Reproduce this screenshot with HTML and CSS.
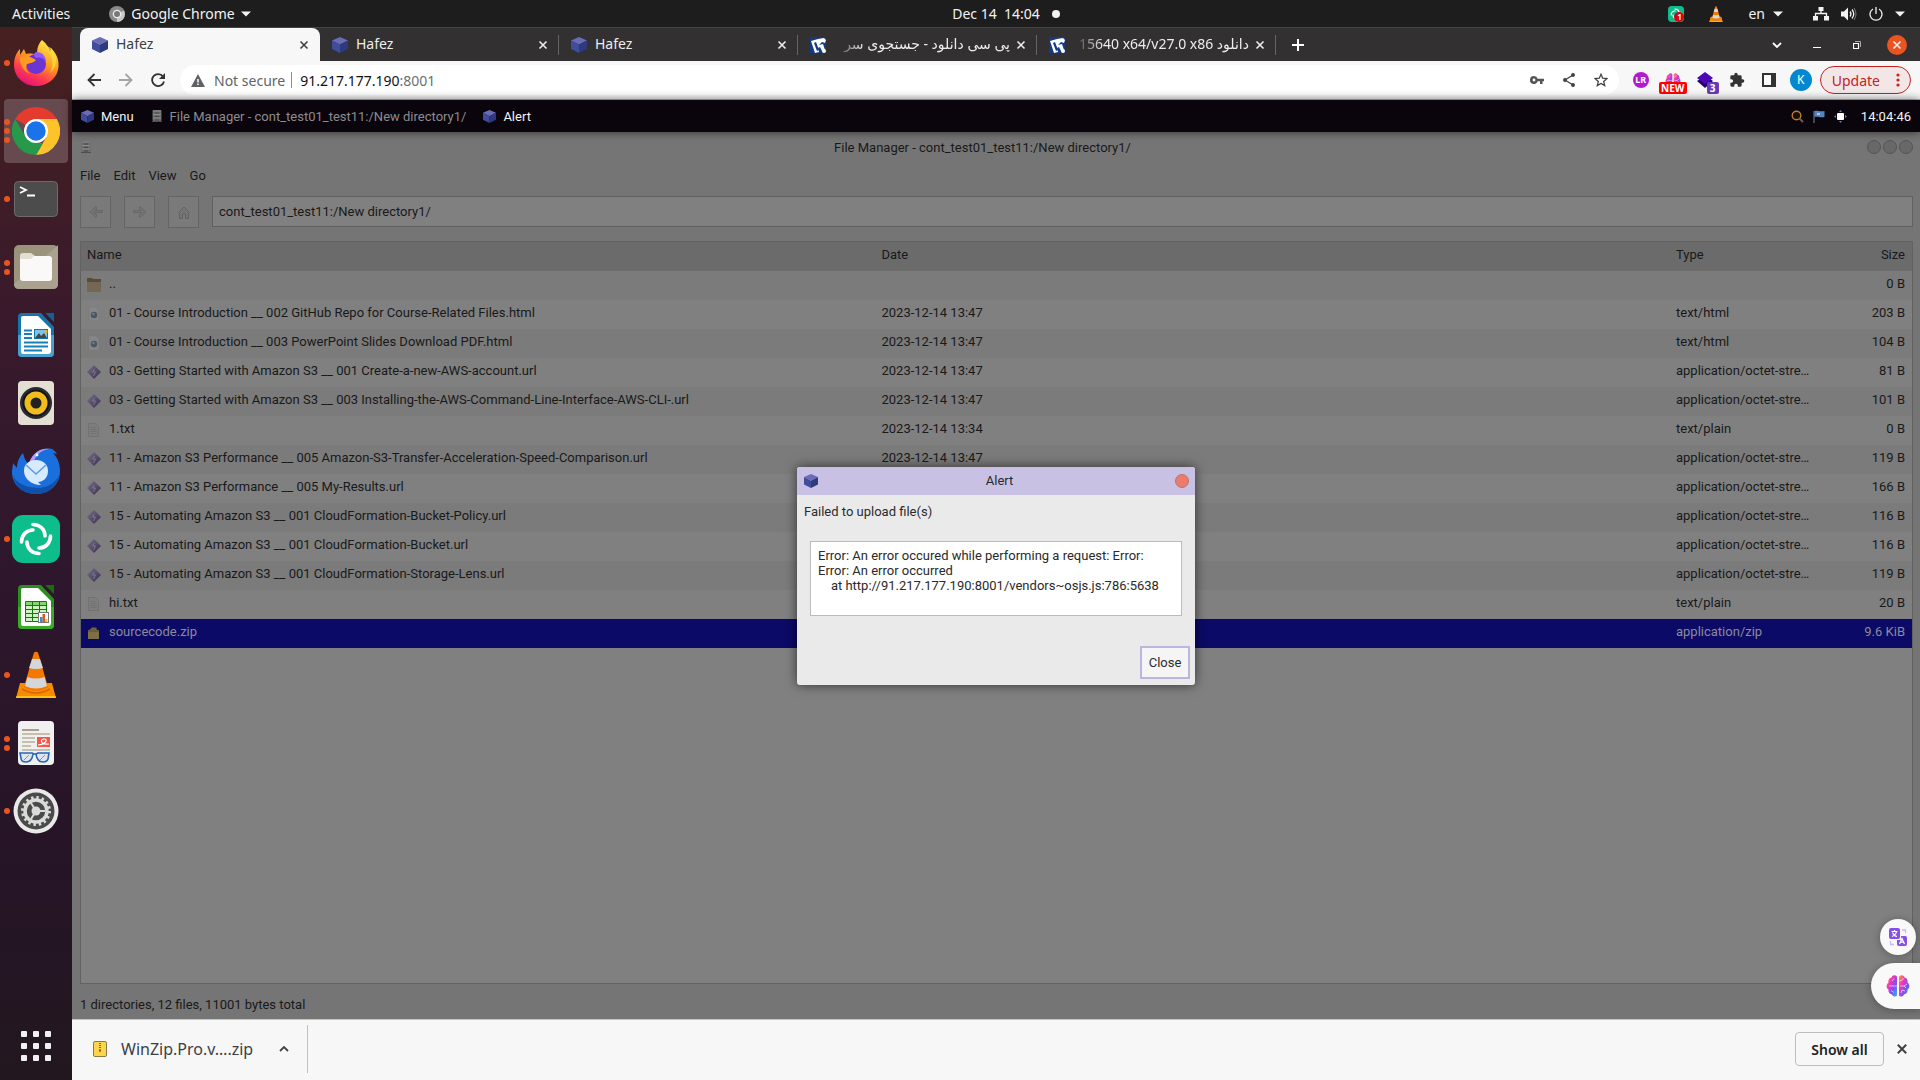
FILE: index.html
```html
<!DOCTYPE html>
<html lang="en">
<head>
    <meta charset="UTF-8">
    <meta name="viewport" content="width=device-width, initial-scale=1.0">
    <title>Hafez</title>
    <link rel="stylesheet" href="styles.css">
</head>
<body>
    <!-- shared icons -->
    <svg class="sprite" width="0" height="0" aria-hidden="true">
        <defs>
            <linearGradient id="diamond-fill" x1="0" y1="0" x2="1" y2="1">
                <stop offset="0" stop-color="#74728a"/>
                <stop offset="1" stop-color="#3c2b4e"/>
            </linearGradient>
            <linearGradient id="brain-fill" x1="0" y1="0" x2="1" y2="1">
                <stop offset="0" stop-color="#ff9d2e"/>
                <stop offset=".35" stop-color="#f033c0"/>
                <stop offset=".65" stop-color="#7a52f5"/>
                <stop offset="1" stop-color="#2fb4ff"/>
            </linearGradient>
        </defs>
        <symbol id="cube" viewBox="0 0 16 16">
            <path d="M8 0l8 3.400-8 4.200L0 3.400z" fill="#6a6cb8"/>
            <path d="M0 3.400l8 4.200V16l-8-4z" fill="#414c9c"/>
            <path d="M16 3.400L8 7.600V16l8-4z" fill="#2e3a7e"/>
        </symbol>
        <symbol id="cross" viewBox="0 0 10 10">
            <path d="M1.500 1.500l7 7M8.500 1.500l-7 7" stroke="currentColor" stroke-width="1.600" fill="none"/>
        </symbol>
        <symbol id="caret" viewBox="0 0 10 6">
            <path d="M0 .5h10L5 5.500z" fill="currentColor"/>
        </symbol>
        <symbol id="cabinet" viewBox="0 0 12 14">
            <rect x="1.500" y="1" width="9" height="11" rx="1" fill="#6a6a6a"/>
            <path d="M2 2h8M2 5.500h8M2 9h8" stroke="#8c8c8c"/>
            <path d="M4 4h4M4 7.500h4M4 11h4" stroke="#484848"/>
            <path d="M1 12.500h10" stroke="#4c4c4c"/>
        </symbol>
        <symbol id="diamond" viewBox="0 0 14 14">
            <path d="M7 0l7 7-7 7-7-7z" fill="url(#diamond-fill)"/>
            <path d="M7.500 4l-2 3 3 0-2 4" stroke="#7d7690" fill="none"/>
        </symbol>
        <symbol id="html-file" viewBox="0 0 14 14">
            <path d="M2 0h7l3 3v11H2z" fill="#868686" stroke="#767676" stroke-width=".5"/>
            <circle cx="7" cy="8" r="3.200" fill="#4a5666"/>
            <circle cx="6.400" cy="7" r="1.300" fill="#6d7b8c"/>
        </symbol>
        <symbol id="text-file" viewBox="0 0 14 14">
            <path d="M1.500 .5h7l3 3v10h-10z" fill="#7d7d7d" stroke="#727272"/>
            <path d="M3.500 4.500h5M3.500 6.500h6M3.500 8.500h6M3.500 10.500h6" stroke="#727272"/>
        </symbol>
        <symbol id="folder" viewBox="0 0 14 14">
            <path d="M0 0h5l1 1h8v12H0z" fill="#564c38"/>
            <path d="M0 4h14v10H0z" fill="#746854"/>
        </symbol>
        <symbol id="zip-file" viewBox="0 0 14 14">
            <path d="M2 4l4-3 2 1 1-1 1 3z" fill="#6e6248"/>
            <path d="M1 4h11v9H1z" fill="#7f6f47"/>
            <path d="M1 4h11v2H1z" fill="#6d5c38"/>
        </symbol>
        <symbol id="brain" viewBox="0 0 24 22">
            <path d="M11 1.500C9-.5 6 0 5.500 2.500 3 3 2 5 2.500 7.500 0 9.500 0 13 2.500 14.500 2 17.500 4 19 6 19.500c1 2.500 4 2.500 5 1z" fill="url(#brain-fill)"/>
            <path d="M13 1.500c2-2 5-1.500 5.500 1 2.500.5 3.500 2.500 3 5 2.500 2 2.500 5.500 0 7 .5 3-1.500 4.500-3.500 5-1 2.500-4 2.500-5 1z" fill="url(#brain-fill)"/>
            <path d="M3 11h8M5 15.500l3 2M8 3.500L6 6M13.500 6l3-1 1-2M14 11h4l3-2M18 11l2 2M15 18l1-3 3 1" stroke="#fff" stroke-opacity=".6" fill="none"/>
        </symbol>
        <symbol id="site-mark" viewBox="0 0 16 16">
            <rect width="16" height="16" fill="#123a86"/>
            <path d="M1 4l7-2 6-1 2 2-1 3-3-1-3 3 4-1 2 6-3 1-2-4-2 1 1 4-4 1z" fill="#fff"/>
            <path d="M4 6l2-1 3 8-2 1z" fill="#123a86"/>
            <circle cx="14" cy="14" r="2" fill="#fff"/>
        </symbol>
        <symbol id="element" viewBox="0 0 48 48">
            <rect width="48" height="48" rx="11" fill="#0dbd8b"/>
            <g fill="none" stroke="#fff" stroke-width="3.600" stroke-linecap="round">
                <path d="M21 9.500c7 0 12 5 12 11.500"/>
                <path d="M38.500 21c0 7-5 12-11.500 12"/>
                <path d="M27 38.500c-7 0-12-5-12-11.500"/>
                <path d="M9.500 27c0-7 5-12 11.500-12"/>
            </g>
        </symbol>
        <symbol id="cone" viewBox="0 0 48 48">
            <path d="M8 32h32l4 15H4z" fill="#f98b00"/>
            <path d="M4.500 45h39l.5 2H4z" fill="#ffc21a"/>
            <path d="M22 1.500q2-1.500 4 0L36 36q-12 8-24 0z" fill="#f57900"/>
            <path d="M20 8h8l3 9q-7 2-14 0zM15.500 26q8.500 3 17 0l2.500 9q-11 5-22 0z" fill="#d3d7da"/>
            <path d="M10 38q14 8 28 0" fill="none" stroke="#d96500" stroke-width="1.500"/>
        </symbol>
    </svg>

    <header class="topbar">
        <div class="topbar-left">
            <button class="top-btn">Activities</button>
            <button class="top-btn app-menu">
                <svg width="16" height="16" viewBox="0 0 16 16"><circle cx="8" cy="8" r="8" fill="#8a8a8a"/><path d="M8 8l7-3.500A8 8 0 0 1 8 16z" fill="#c9c9c9"/><circle cx="8" cy="8" r="4.300" fill="#eee"/><circle cx="8" cy="8" r="3" fill="#777"/></svg>
                Google Chrome
                <svg width="10" height="6"><use href="#caret"/></svg>
            </button>
        </div>
        <button class="top-btn clock">Dec 14&nbsp; 14:04 <span class="dot"></span></button>
        <div class="topbar-right">
            <button class="tray-btn badge-host" aria-label="Element">
                <svg width="16" height="16"><use href="#element"/></svg>
                <span class="tray-badge">1</span>
            </button>
            <button class="tray-btn cone-btn" aria-label="VLC"><svg width="16" height="16"><use href="#cone"/></svg></button>
            <button class="top-btn lang">en <svg width="10" height="6"><use href="#caret"/></svg></button>
            <button class="tray-btn system" aria-label="System menu">
                <svg width="16" height="14" viewBox="0 0 16 14"><path d="M5.500 0h5v4h-5zM0 9h5v4.500H0zM11 9h5v4.500h-5z" fill="#f2f2f2"/><path d="M8 4v2.500M2.500 9V6.500h11V9" fill="none" stroke="#f2f2f2" stroke-width="1.300"/></svg>
                <svg width="16" height="14" viewBox="0 0 16 14"><path d="M0 4.500h3L7 .5v13l-4-4H0z" fill="#f2f2f2"/><path d="M9 4.500q2 2.500 0 5M11 2.500q3.500 4.500 0 9" fill="none" stroke="#f2f2f2" stroke-width="1.300"/><path d="M13 1q4 6 0 12" fill="none" stroke="#777"/></svg>
                <svg width="14" height="14" viewBox="0 0 14 14"><path d="M4 2a6 6 0 1 0 6 0M7 0v7" fill="none" stroke="#f2f2f2" stroke-width="1.300"/></svg>
                <svg width="10" height="6"><use href="#caret"/></svg>
            </button>
        </div>
    </header>

    <div class="desktop">
        <nav class="dock">
            <button class="dock-item" aria-label="Firefox">
                <span class="dots"><i></i></span>
                <svg width="48" height="48" viewBox="0 0 48 48">
                    <defs><linearGradient id="ff" x1=".8" y1="0" x2=".3" y2="1"><stop offset="0" stop-color="#fff44f"/><stop offset=".45" stop-color="#ff9a1f"/><stop offset=".75" stop-color="#ff3a50"/><stop offset="1" stop-color="#e0107c"/></linearGradient></defs>
                    <path d="M30 1c5 4 7 8 8 12 1-2 1-3 1-4 5 5 8 11 7.500 18C46 39 36 47 24 47S2 38 2 26c0-7 2-12 6-16v6l4-6 2 5c5-1 8 0 11 1 0-6 1-11 5-15z" fill="url(#ff)"/>
                    <circle cx="24" cy="25" r="10" fill="#6a35d0"/>
                    <path d="M24 13c7 0 10 5 10 10-3-5-7-5-10-4-2-2-3-4 0-6z" fill="#9059ff"/>
                    <path d="M8 18c6-2 9-1 16 3-2 3-6 3-9 4-2 4 0 8 4 10-8-2-11-9-11-17z" fill="#ff9b22"/>
                    <path d="M33 6c5 8 11 17 5 28 8-7 8-17 1-25z" fill="#ffe13c" opacity=".7"/>
                </svg>
            </button>
            <button class="dock-item active" aria-label="Google Chrome">
                <span class="dots"><i></i><i></i><i></i></span>
                <svg width="48" height="48" viewBox="0 0 48 48">
                    <path d="M24 24L3.200 12A24 24 0 0 1 44.800 12z" fill="#e33b2e"/>
                    <path d="M24 24V12h20.800A24 24 0 0 1 24 48l10.400-18z" fill="#fcc42a"/>
                    <path d="M3.200 12l10.400 18L24 36h7l-7 12A24 24 0 0 1 3.200 12z" fill="#26994a"/>
                    <circle cx="24" cy="24" r="12" fill="#fff"/>
                    <circle cx="24" cy="24" r="9.700" fill="#1a73e8"/>
                </svg>
            </button>
            <button class="dock-item" aria-label="Terminal">
                <span class="dots"><i></i></span>
                <svg width="48" height="48" viewBox="0 0 48 48">
                    <rect x="2.500" y="6.500" width="43" height="35" rx="4" fill="#4c4c4c" stroke="#6c6c6c"/>
                    <path d="M8 12l6 3-6 3M15 20.500h8" fill="none" stroke="#fff" stroke-width="1.800"/>
                </svg>
            </button>
            <button class="dock-item" aria-label="Files">
                <span class="dots"><i></i><i></i></span>
                <svg width="48" height="48" viewBox="0 0 48 48">
                    <rect x="2" y="2" width="44" height="44" rx="5" fill="#9c937c"/>
                    <path d="M46 2v39q0 5-5 5H7q-5 0-5-5z" fill="#aaa28e"/>
                    <path d="M8 13q0-3 3-3h8l4 3v6H8z" fill="#e3ded3"/>
                    <path d="M8 16h11l3-3h15q3 0 3 3v19q0 3-3 3H11q-3 0-3-3z" fill="#faf9f7"/>
                </svg>
            </button>
            <button class="dock-item" aria-label="LibreOffice Writer">
                <svg width="48" height="48" viewBox="0 0 48 48">
                    <path d="M10 2h19l13 14v26q0 4-4 4H10q-4 0-4-4V6q0-4 4-4z" fill="#1674ad"/>
                    <path d="M6 24h36v18q0 4-4 4H10q-4 0-4-4z" fill="#48a0d0"/>
                    <path d="M11 5h15l13 13v22q0 3-3 3H11q-2 0-2-3V7q0-2 2-2z" fill="#fff"/>
                    <path d="M33 2h9v9z" fill="#15618e"/>
                    <path d="M12 19.500h8M12 23h8M12 27h8M12 31.500h24M12 35.500h24M12 39.500h18" stroke="#1780b8" stroke-width="1.800"/>
                    <rect x="22.500" y="18.500" width="13" height="9" fill="#7cc2ea" stroke="#1674ad"/>
                    <path d="M23 27l4-5 2 3 3-3 3 5z" fill="#444"/><circle cx="34" cy="20.500" r="1.600" fill="#f5b400"/>
                </svg>
            </button>
            <button class="dock-item" aria-label="Rhythmbox">
                <svg width="48" height="48" viewBox="0 0 48 48">
                    <rect x="6" y="2" width="36" height="44" rx="4" fill="#e4dfd3"/>
                    <circle cx="24" cy="24" r="16" fill="#2b2b33"/>
                    <circle cx="24" cy="24" r="13.500" fill="#14141a"/>
                    <circle cx="24" cy="24" r="11.500" fill="#f0bd1c"/>
                    <circle cx="24" cy="24" r="5.500" fill="#222"/>
                </svg>
            </button>
            <button class="dock-item" aria-label="Thunderbird">
                <svg width="48" height="48" viewBox="0 0 48 48">
                    <path d="M11 6c1 5 3 9 6 11C20 6 29 0 40 2c2 1 4 3 5 5l-4-1c4 4 7 10 7 18 0 13-10 23-24 23S0 37 0 25c0-4 1-6 1-9l4 5c0-7 3-12 6-15z" fill="#1a6fdc"/>
                    <path d="M1 28c4 14 38 20 46 0-2 12-11 19-23 19S3 40 1 28z" fill="#0f51a8"/>
                    <path d="M17 16C21 5 30 1 37 2c-8 1-13 6-15 12z" fill="#b79af5"/>
                    <circle cx="25" cy="8" r="1.400" fill="#fff"/>
                    <path d="M12 24c0-7 5-11 12-11s12 4 12 11-5 11-10 11l3 3c-9 0-17-6-17-14z" fill="#d6ebff"/>
                    <path d="M14 18l10 9 10-9" fill="none" stroke="#5c9ae6" stroke-width="1.500"/>
                </svg>
            </button>
            <button class="dock-item" aria-label="Element">
                <span class="dots"><i></i></span>
                <svg width="48" height="48"><use href="#element"/></svg>
            </button>
            <button class="dock-item" aria-label="LibreOffice Calc">
                <svg width="48" height="48" viewBox="0 0 48 48">
                    <path d="M10 2h19l13 14v26q0 4-4 4H10q-4 0-4-4V6q0-4 4-4z" fill="#2b8f1d"/>
                    <path d="M6 24h36v18q0 4-4 4H10q-4 0-4-4z" fill="#3cab2a"/>
                    <path d="M11 5h15l13 13v22q0 3-3 3H11q-2 0-2-3V7q0-2 2-2z" fill="#fff"/>
                    <path d="M33 2h9v9z" fill="#1c6b12"/>
                    <path d="M14 19h20v20H14z" fill="#ccf3c0"/>
                    <path d="M14 19h20v4H14z" fill="#86d573"/>
                    <path d="M13.500 18.500h21v20h-21zM20.500 18v21M27.500 18v21M13 22.500h22M13 26.500h22M13 30.500h22M13 34.500h22" fill="none" stroke="#1a7410"/>
                    <rect x="26.500" y="29.500" width="10" height="10" fill="#fff" stroke="#777"/>
                    <path d="M28 34h2.500v5H28z" fill="#2a94d8"/><path d="M30.500 31H33v8h-2.500z" fill="#d9572b"/><path d="M33 36h2.500v3H33z" fill="#f3c22b"/>
                </svg>
            </button>
            <button class="dock-item" aria-label="VLC media player">
                <span class="dots"><i></i></span>
                <svg width="48" height="48"><use href="#cone"/></svg>
            </button>
            <button class="dock-item" aria-label="Document Viewer">
                <span class="dots"><i></i><i></i></span>
                <svg width="48" height="48" viewBox="0 0 48 48">
                    <rect x="6" y="2" width="36" height="44" rx="4" fill="#f0f0f0"/>
                    <path d="M10 11h17" stroke="#a89f90" stroke-width="2"/>
                    <path d="M10 15h28M10 19h13M10 23h13M10 27h9M10 31h28" stroke="#c6bfae" stroke-width="1.800"/>
                    <rect x="25" y="18" width="13" height="10" fill="#f4564a"/>
                    <path d="M26 26c9-1 10-6 6-6s-4 6 5 5" fill="none" stroke="#fff" stroke-width="1.200"/>
                    <path d="M8 34h12q3 2 6 0h11l-1 6q-1 3-5 3-6 0-7-8h-3q-1 8-7 8-5 0-5-4z" fill="#dfe6ee" stroke="#2a66b8" stroke-width="1.600"/>
                    <path d="M12 41l5-5M28 41l5-5" stroke="#8d959e"/>
                </svg>
            </button>
            <button class="dock-item" aria-label="Settings">
                <span class="dots"><i></i></span>
                <svg width="48" height="48" viewBox="0 0 48 48">
                    <circle cx="24" cy="24" r="22.500" fill="#e9e9e9"/>
                    <circle cx="24" cy="24" r="18.500" fill="#4a4a4a"/>
                    <circle cx="24" cy="24" r="13.500" fill="none" stroke="#dadada" stroke-width="3" stroke-dasharray="2.400 2.900"/>
                    <circle cx="24" cy="24" r="11" fill="none" stroke="#dadada" stroke-width="3.500"/>
                    <path d="M24 24h9M24 24l-5-8M24 24l-5 8" stroke="#dadada" stroke-width="2"/>
                    <circle cx="24" cy="24" r="4.500" fill="#dadada"/>
                </svg>
            </button>
            <button class="dock-item apps" aria-label="Show Applications">
                <svg width="30" height="30" viewBox="0 0 30 30" fill="#f2f0f2">
                    <rect width="6" height="6" rx="1"/><rect x="12" width="6" height="6" rx="1"/><rect x="24" width="6" height="6" rx="1"/>
                    <rect y="12" width="6" height="6" rx="1"/><rect x="12" y="12" width="6" height="6" rx="1"/><rect x="24" y="12" width="6" height="6" rx="1"/>
                    <rect y="24" width="6" height="6" rx="1"/><rect x="12" y="24" width="6" height="6" rx="1"/><rect x="24" y="24" width="6" height="6" rx="1"/>
                </svg>
            </button>
        </nav>

        <div class="browser">
            <div class="tabstrip">
                <div class="tab current">
                    <svg width="16" height="16"><use href="#cube"/></svg>
                    <span class="tab-title">Hafez</span>
                    <button class="tab-close" aria-label="Close tab"><svg width="10" height="10"><use href="#cross"/></svg></button>
                </div>
                <div class="tab">
                    <svg width="16" height="16"><use href="#cube"/></svg>
                    <span class="tab-title">Hafez</span>
                    <button class="tab-close" aria-label="Close tab"><svg width="10" height="10"><use href="#cross"/></svg></button>
                </div>
                <div class="tab">
                    <svg width="16" height="16"><use href="#cube"/></svg>
                    <span class="tab-title">Hafez</span>
                    <button class="tab-close" aria-label="Close tab"><svg width="10" height="10"><use href="#cross"/></svg></button>
                </div>
                <div class="tab">
                    <svg width="16" height="16"><use href="#site-mark"/></svg>
                    <span class="tab-title rtl" dir="rtl" lang="fa">پی سی دانلود - جستجوی سر</span>
                    <button class="tab-close" aria-label="Close tab"><svg width="10" height="10"><use href="#cross"/></svg></button>
                </div>
                <div class="tab">
                    <svg width="16" height="16"><use href="#site-mark"/></svg>
                    <span class="tab-title rtl" dir="rtl" lang="fa">دانلود <bdi dir="ltr">15640 x64/v27.0 x86</bdi></span>
                    <button class="tab-close" aria-label="Close tab"><svg width="10" height="10"><use href="#cross"/></svg></button>
                </div>
                <button class="new-tab" aria-label="New tab"><svg width="12" height="12" viewBox="0 0 12 12"><path d="M6 0v12M0 6h12" stroke="#fff" stroke-width="2"/></svg></button>
                <div class="window-controls">
                    <button aria-label="Search tabs"><svg width="10" height="6" viewBox="0 0 10 6"><path d="M1 1l4 4 4-4" fill="none" stroke="#fff" stroke-width="1.800"/></svg></button>
                    <button aria-label="Minimize"><svg width="8" height="8" viewBox="0 0 8 8"><path d="M0 6.500h8" stroke="#fff"/></svg></button>
                    <button aria-label="Restore"><svg width="8" height="8" viewBox="0 0 8 8"><path d="M.5 2.500h5v5h-5z" fill="none" stroke="#fff" stroke-width="1.200"/><path d="M2 .5h5.500V6" fill="none" stroke="#aaa"/></svg></button>
                    <button class="close-window" aria-label="Close"><svg width="10" height="10"><use href="#cross"/></svg></button>
                </div>
            </div>

            <div class="toolbar">
                <button class="tool" aria-label="Back"><svg width="14" height="14" viewBox="0 0 14 14"><path d="M14 7H1.500M7.500 1L1.500 7l6 6" fill="none" stroke="#333" stroke-width="1.800"/></svg></button>
                <button class="tool" aria-label="Forward"><svg width="14" height="14" viewBox="0 0 14 14"><path d="M0 7h12.500M6.500 1l6 6-6 6" fill="none" stroke="#a5a5a5" stroke-width="1.800"/></svg></button>
                <button class="tool" aria-label="Reload"><svg width="14" height="14" viewBox="0 0 14 14"><path d="M12 3.500A6 6 0 1 0 13 8.500" fill="none" stroke="#333" stroke-width="1.800"/><path d="M14 0v6H8z" fill="#333"/></svg></button>
                <div class="omnibox">
                    <button class="site-info"><svg width="14" height="13" viewBox="0 0 14 13"><path d="M7 0l7 13H0z" fill="#5f6368"/><path d="M7 5v3.500M7 9.500v1.500" stroke="#fff" stroke-width="1.500"/></svg>Not secure</button>
                    <span class="address" role="textbox" aria-label="Address" tabindex="0">91.217.177.190<em>:8001</em></span>
                    <button class="tool" aria-label="Passwords"><svg width="14" height="8" viewBox="0 0 14 8"><path d="M4 0a4 4 0 1 0 3.700 5.300H10V8h2.500V5.300H14V2.700H7.700A4 4 0 0 0 4 0zm0 2.600a1.400 1.400 0 1 1 0 2.800 1.400 1.400 0 0 1 0-2.800z" fill="#555"/></svg></button>
                    <button class="tool" aria-label="Share"><svg width="12" height="14" viewBox="0 0 12 14"><path d="M10 2L2 7l8 5" fill="none" stroke="#444" stroke-width="1.300"/><circle cx="10" cy="2" r="2" fill="#444"/><circle cx="2" cy="7" r="2" fill="#444"/><circle cx="10" cy="12" r="2" fill="#444"/></svg></button>
                    <button class="tool" aria-label="Bookmark"><svg width="14" height="14" viewBox="0 0 14 14"><path d="M7 1.300l1.700 3.900 4.200.4-3.200 2.800 1 4.200L7 10.400l-3.700 2.200 1-4.200L1.100 5.600l4.200-.4z" fill="none" stroke="#444" stroke-width="1.300"/></svg></button>
                </div>
                <button class="tool" aria-label="LR extension"><span class="lr">LR</span></button>
                <button class="tool badge-host" aria-label="Brain extension"><svg width="16" height="15"><use href="#brain"/></svg><span class="badge new">NEW</span></button>
                <button class="tool badge-host" aria-label="Layers extension"><svg width="16" height="16" viewBox="0 0 16 16"><path d="M8 4l8 5-8 7-8-7z" fill="#240070"/><path d="M8 0l8 6-8 6-8-6z" fill="#4a08b8"/></svg><span class="badge count">3</span></button>
                <button class="tool" aria-label="Extensions"><svg width="16" height="16" viewBox="0 0 24 24"><path d="M20.500 11H19V7a2 2 0 0 0-2-2h-4V3.500a2.500 2.500 0 0 0-5 0V5H4a2 2 0 0 0-2 2v3.800h1.500a2.700 2.700 0 0 1 0 5.400H2V20a2 2 0 0 0 2 2h3.800v-1.500a2.700 2.700 0 0 1 5.400 0V22H17a2 2 0 0 0 2-2v-4h1.500a2.500 2.500 0 0 0 0-5z" fill="#333"/></svg></button>
                <button class="tool" aria-label="Side panel"><svg width="14" height="14" viewBox="0 0 14 14"><rect x="1" y="1" width="12" height="12" fill="#fff" stroke="#333" stroke-width="2"/><path d="M9 0h5v14H9z" fill="#333"/></svg></button>
                <button class="tool" aria-label="Profile"><span class="avatar">K</span></button>
                <button class="update">Update <svg width="4" height="14" viewBox="0 0 4 14"><g fill="#c5221f"><circle cx="2" cy="2" r="1.600"/><circle cx="2" cy="7" r="1.600"/><circle cx="2" cy="12" r="1.600"/></g></svg></button>
            </div>

            <main class="page">
                <div class="panel">
                    <button class="panel-item"><svg width="13" height="13"><use href="#cube"/></svg>Menu</button>
                    <button class="panel-item muted"><svg width="12" height="14"><use href="#cabinet"/></svg>File Manager - cont_test01_test11:/New directory1/</button>
                    <button class="panel-item"><svg width="13" height="13"><use href="#cube"/></svg>Alert</button>
                    <div class="panel-tray">
                        <svg width="13" height="13" viewBox="0 0 13 13"><circle cx="5.500" cy="5.500" r="4.300" fill="#16100c" stroke="#c27a2c" stroke-width="1.400"/><path d="M8.500 8.500l3.500 3.500" stroke="#7d5e44" stroke-width="1.800"/></svg>
                        <svg width="12" height="13" viewBox="0 0 12 13"><path d="M1 1v12" stroke="#7c8894"/><path d="M1.500 1c3-1 5 1 10 0v6c-4 1-7-1-10 0z" fill="#5585bd"/><path d="M4 3h3v2H4z" fill="#a9c4e0"/></svg>
                        <svg width="13" height="13" viewBox="0 0 13 13"><rect x="3" y="3" width="7" height="7" rx="1" fill="#fff"/><path d="M5 2l1.500-2L8 2zM5 11l1.500 2L8 11zM2 5L0 6.500 2 8zM11 5l2 1.500L11 8z" fill="#5a82b0"/></svg>
                        <time>14:04:46</time>
                    </div>
                </div>

                <div class="workspace">
                    <section class="file-manager">
                        <div class="fm-title">
                            <svg width="12" height="14"><use href="#cabinet"/></svg>
                            <span>File Manager - cont_test01_test11:/New directory1/</span>
                            <div class="fm-controls">
                                <button aria-label="Minimize"></button><button aria-label="Maximize"></button><button aria-label="Close"></button>
                            </div>
                        </div>
                        <div class="fm-menu">
                            <button>File</button><button>Edit</button><button>View</button><button>Go</button>
                        </div>
                        <div class="fm-toolbar">
                            <button aria-label="Back"><svg width="14" height="12" viewBox="0 0 14 12"><path d="M7 .5L1 6l6 5.500L8 9 5 6.500h8.500v-2H6L8 3z" fill="#747474" stroke="#646464" stroke-width=".8"/></svg></button>
                            <button aria-label="Forward"><svg width="14" height="12" viewBox="0 0 14 12"><path d="M7 .5L13 6l-6 5.500L6 9l3-2.500H.5v-2H8L6 3z" fill="#747474" stroke="#646464" stroke-width=".8"/></svg></button>
                            <button aria-label="Home"><svg width="14" height="13" viewBox="0 0 14 13"><path d="M1 7l6-6 6 6M2.500 7v5.500h3V8h3v4.500h3V7" fill="#747474" stroke="#626262"/></svg></button>
                            <input type="text" aria-label="Path" value="cont_test01_test11:/New directory1/">
                        </div>
                        <div class="fm-list">
                            <table>
                                <thead>
                                    <tr><th>Name</th><th>Date</th><th class="col-type">Type</th><th class="col-size">Size</th></tr>
                                </thead>
                                <tbody>
                                    <tr><td><svg width="14" height="14"><use href="#folder"/></svg>..</td><td></td><td></td><td>0 B</td></tr>
                                    <tr><td><svg width="14" height="14"><use href="#html-file"/></svg>01 - Course Introduction __ 002 GitHub Repo for Course-Related Files.html</td><td>2023-12-14 13:47</td><td>text/html</td><td>203 B</td></tr>
                                    <tr><td><svg width="14" height="14"><use href="#html-file"/></svg>01 - Course Introduction __ 003 PowerPoint Slides Download PDF.html</td><td>2023-12-14 13:47</td><td>text/html</td><td>104 B</td></tr>
                                    <tr><td><svg width="14" height="14"><use href="#diamond"/></svg>03 - Getting Started with Amazon S3 __ 001 Create-a-new-AWS-account.url</td><td>2023-12-14 13:47</td><td>application/octet-stream</td><td>81 B</td></tr>
                                    <tr><td><svg width="14" height="14"><use href="#diamond"/></svg>03 - Getting Started with Amazon S3 __ 003 Installing-the-AWS-Command-Line-Interface-AWS-CLI-.url</td><td>2023-12-14 13:47</td><td>application/octet-stream</td><td>101 B</td></tr>
                                    <tr><td><svg width="14" height="14"><use href="#text-file"/></svg>1.txt</td><td>2023-12-14 13:34</td><td>text/plain</td><td>0 B</td></tr>
                                    <tr><td><svg width="14" height="14"><use href="#diamond"/></svg>11 - Amazon S3 Performance __ 005 Amazon-S3-Transfer-Acceleration-Speed-Comparison.url</td><td>2023-12-14 13:47</td><td>application/octet-stream</td><td>119 B</td></tr>
                                    <tr><td><svg width="14" height="14"><use href="#diamond"/></svg>11 - Amazon S3 Performance __ 005 My-Results.url</td><td></td><td>application/octet-stream</td><td>166 B</td></tr>
                                    <tr><td><svg width="14" height="14"><use href="#diamond"/></svg>15 - Automating Amazon S3 __ 001 CloudFormation-Bucket-Policy.url</td><td></td><td>application/octet-stream</td><td>116 B</td></tr>
                                    <tr><td><svg width="14" height="14"><use href="#diamond"/></svg>15 - Automating Amazon S3 __ 001 CloudFormation-Bucket.url</td><td></td><td>application/octet-stream</td><td>116 B</td></tr>
                                    <tr><td><svg width="14" height="14"><use href="#diamond"/></svg>15 - Automating Amazon S3 __ 001 CloudFormation-Storage-Lens.url</td><td></td><td>application/octet-stream</td><td>119 B</td></tr>
                                    <tr><td><svg width="14" height="14"><use href="#text-file"/></svg>hi.txt</td><td></td><td>text/plain</td><td>20 B</td></tr>
                                    <tr class="selected"><td><svg width="14" height="14"><use href="#zip-file"/></svg>sourcecode.zip</td><td></td><td>application/zip</td><td>9.6 KiB</td></tr>
                                </tbody>
                            </table>
                        </div>
                        <div class="fm-status">1 directories, 12 files, 11001 bytes total</div>
                    </section>

                    <div class="overlay">
                        <div class="dialog" role="dialog" aria-labelledby="alert-title">
                            <div class="dialog-title">
                                <svg width="14" height="14"><use href="#cube"/></svg>
                                <span id="alert-title">Alert</span>
                                <button aria-label="Close dialog"></button>
                            </div>
                            <div class="dialog-body">
                                <label for="alert-text">Failed to upload file(s)</label>
                                <textarea id="alert-text" readonly>Error: An error occured while performing a request: Error: Error: An error occurred
    at http://91.217.177.190:8001/vendors~osjs.js:786:5638</textarea>
                                <button class="dialog-close">Close</button>
                            </div>
                        </div>
                    </div>

                    <div class="floating">
                        <button class="translate" aria-label="Translate">
                            <svg width="18" height="18" viewBox="0 0 18 18">
                                <rect width="11" height="11" rx="2" fill="#8450e8"/>
                                <path d="M2.500 3.500h6M5.500 2v1.500M3 8.500Q7 7 7.500 3.500M3.500 4.500Q5 8 8 8.500" fill="none" stroke="#fff" stroke-width="1.200"/>
                                <path d="M12 8h4q2 0 2 2v6q0 2-2 2h-6q-2 0-2-2v-4h4z" fill="#8450e8"/>
                                <path d="M10.500 16l2.500-5.500 2.500 5.500M11.500 14.200h3" fill="none" stroke="#fff" stroke-width="1.300"/>
                                <path d="M13 2h3.500v3M1.500 13v3.500H5" fill="none" stroke="#cdb6f4" stroke-width="1.300"/>
                            </svg>
                        </button>
                        <button class="assistant" aria-label="Assistant"><svg width="24" height="22"><use href="#brain"/></svg></button>
                    </div>
                </div>
            </main>

            <footer class="downloads">
                <button class="download">
                    <svg width="14" height="16" viewBox="0 0 14 16"><rect x=".5" y=".5" width="13" height="15" rx="1.500" fill="#fbd64d" stroke="#8a7a45"/><path d="M7 2v6" stroke="#8a6a10" stroke-width="2" stroke-dasharray="1 1"/><path d="M6.500 8.500h1v2h-1z" stroke="#8a6a10" fill="none"/></svg>
                    WinZip.Pro.v….zip
                </button>
                <button class="download-menu" aria-label="Download options"><svg width="10" height="6" viewBox="0 0 10 6"><path d="M1 5l4-4 4 4" fill="none" stroke="#444" stroke-width="1.800"/></svg></button>
                <button class="show-all">Show all</button>
                <button class="downloads-close" aria-label="Close downloads"><svg width="12" height="12"><use href="#cross"/></svg></button>
            </footer>
        </div>
    </div>
</body>
</html>
```
FILE: styles.css
```css
* {
    box-sizing: border-box;
}

body {
    margin: 0;
    height: 100vh;
    display: flex;
    flex-direction: column;
    overflow: hidden;
    font-family: 'Noto Sans', 'DejaVu Sans', sans-serif;
    font-size: 14px;
    background: #1d1d1d;
}

button {
    margin: 0;
    padding: 0;
    border: 0;
    background: none;
    color: inherit;
    font: inherit;
    cursor: pointer;
}

svg {
    display: block;
    flex: none;
}

.sprite {
    position: absolute;
}

/* top bar */
.topbar {
    flex: none;
    height: 27px;
    display: grid;
    grid-template-columns: 1fr auto 1fr;
    align-items: center;
    background: #1d1d1d;
    color: #f2f2f2;
}

.topbar-left,
.topbar-right,
.top-btn,
.tray-btn {
    display: flex;
    align-items: center;
}

.topbar-left {
    gap: 39px;
    padding-left: 12px;
}

.app-menu {
    gap: 6px;
}

.clock {
    gap: 12px;
    padding-left: 92px;
}

.dot {
    width: 8px;
    height: 8px;
    border-radius: 50%;
    background: #f2f2f2;
}

.topbar-right {
    justify-content: flex-end;
    padding-right: 15px;
}

.badge-host {
    position: relative;
}

.tray-badge {
    position: absolute;
    right: 0;
    bottom: 0;
    width: 10px;
    height: 10px;
    border-radius: 50%;
    background: #d8000c;
    color: #fff;
    font-size: 8px;
    font-weight: bold;
    line-height: 10px;
}

.cone-btn {
    margin-left: 24px;
}

.lang {
    gap: 8px;
    margin-left: 24px;
}

.system {
    gap: 12px;
    margin-left: 30px;
}

.desktop {
    flex: 1;
    min-height: 0;
    display: flex;
}

/* dock */
.dock {
    flex: none;
    width: 72px;
    display: flex;
    flex-direction: column;
    align-items: center;
    gap: 4px;
    padding: 4px 0 2px;
    background: linear-gradient(#472120, #3a1a2b 25%, #2f172d 50%, #251426 80%, #22171f);
}

.dock-item {
    position: relative;
    width: 64px;
    height: 64px;
    flex: none;
    display: flex;
    align-items: center;
    justify-content: center;
    border-radius: 4px;
}

.dock-item.active {
    background: #664a50;
}

.apps {
    margin-top: auto;
}

.dots {
    position: absolute;
    left: 0;
    display: flex;
    flex-direction: column;
    gap: 3px;
}

.dots i {
    width: 6px;
    height: 6px;
    border-radius: 50%;
    background: #e95420;
}

.browser {
    flex: 1;
    min-width: 0;
    display: flex;
    flex-direction: column;
}

/* tabs */
.tabstrip {
    flex: none;
    height: 34px;
    display: flex;
    align-items: center;
    padding-left: 8px;
    border-top: 1px solid #454344;
    background: #323031;
    color: #ededed;
}

.tab {
    width: 239px;
    height: 20px;
    display: flex;
    align-items: center;
    padding: 0 10px 0 12px;
    border-right: 1px solid #666465;
}

.tab.current {
    width: 240px;
    height: 100%;
    padding-right: 11px;
    border-right: 0;
    border-radius: 8px 8px 0 0;
    background: #f7f7f7;
    color: #3c4043;
}

.tab-title {
    flex: 1;
    min-width: 0;
    margin: 0 6px 0 8px;
    padding-bottom: 2px;
    overflow: hidden;
    white-space: nowrap;
}

.tab-title.rtl {
    mask-image: linear-gradient(to right, transparent, #000 30px);
}

.tab-close {
    width: 10px;
    height: 10px;
}

.new-tab {
    margin-left: 16px;
}

.window-controls {
    margin-left: auto;
    display: flex;
    padding-right: 3px;
}

.window-controls button {
    width: 40px;
    display: flex;
    align-items: center;
    justify-content: center;
}

.window-controls .close-window {
    width: 20px;
    height: 20px;
    margin: 0 10px;
    border-radius: 50%;
    background: #e95420;
}

/* toolbar */
.toolbar {
    flex: none;
    height: 39px;
    display: flex;
    align-items: center;
    padding: 0 9px 0 6px;
    border-bottom: 1px solid #b8bcbd;
    background: #f7f7f7;
}

.tool {
    width: 32px;
    height: 30px;
    display: flex;
    align-items: center;
    justify-content: center;
}

.omnibox {
    flex: 1;
    height: 30px;
    margin: 0 6px;
    padding: 0 2px 0 11px;
    display: flex;
    align-items: center;
    border-radius: 15px;
    background: #fff;
}

.site-info {
    display: flex;
    align-items: center;
    gap: 9px;
    color: #5f6368;
    border-right: 1px solid #8a8d91;
    height: 16px;
    padding-right: 6px;
}

.address {
    flex: 1;
    padding-left: 8px;
    color: #111;
}

.address em {
    font-style: normal;
    color: #6b6f74;
}

.lr {
    width: 16px;
    height: 16px;
    border-radius: 50%;
    background: #b01bd0;
    color: #fff;
    font-size: 9px;
    font-weight: bold;
    line-height: 16px;
}

.badge {
    position: absolute;
    height: 12px;
    border-radius: 2px;
    color: #fff;
    font-size: 10px;
    font-weight: bold;
    line-height: 12px;
}

.badge.new {
    left: 2px;
    bottom: 1px;
    width: 28px;
    background: #f00;
}

.badge.count {
    right: 2px;
    bottom: 1px;
    width: 12px;
    background: #6a3ab8;
}

.avatar {
    width: 22px;
    height: 22px;
    border-radius: 50%;
    background: #0288d1;
    color: #fff;
    font-size: 12px;
    line-height: 22px;
}

.update {
    height: 28px;
    margin-left: 3px;
    padding: 0 10px 0 11px;
    display: flex;
    align-items: center;
    gap: 16px;
    border: 1px solid #c5221f;
    border-radius: 14px;
    background: #f3e6e6;
    color: #c5221f;
}

/* page */
.page {
    flex: 1;
    min-height: 0;
    display: flex;
    flex-direction: column;
    font-family: Roboto, sans-serif;
    font-size: 13px;
}

.panel {
    position: relative;
    z-index: 1;
    flex: none;
    height: 32px;
    display: flex;
    align-items: center;
    gap: 17px;
    padding: 0 9px;
    background: #0a050d;
    color: #f4f4f4;
    box-shadow: 0 0 10px rgba(0, 0, 0, 0.6);
}

.panel-item {
    display: flex;
    align-items: center;
    gap: 7px;
}

.muted {
    color: #8d8b8e;
}

.panel-tray {
    margin-left: auto;
    display: flex;
    align-items: center;
    gap: 9px;
}

.panel-tray time {
    margin-left: 5px;
}

.workspace {
    position: relative;
    flex: 1;
    min-height: 0;
}

.file-manager {
    height: 100%;
    display: flex;
    flex-direction: column;
    padding: 0 7px 0 8px;
    background: #757575;
    color: #191919;
}

.fm-title,
.dialog-title {
    display: grid;
    grid-template-columns: auto 1fr auto;
    align-items: center;
}

.fm-title {
    height: 30px;
}

.fm-title span,
.dialog-title span {
    padding-left: 6px;
    text-align: center;
}

.fm-controls {
    display: flex;
    gap: 2px;
}

.fm-controls button {
    width: 14px;
    height: 14px;
    border: 1px solid #555;
    border-radius: 50%;
    background: #686868;
}

.fm-menu {
    height: 27px;
    display: flex;
    align-items: center;
    gap: 13px;
}

.fm-toolbar {
    display: flex;
    gap: 13px;
    margin: 7px 0 13px;
}

.fm-toolbar button {
    width: 31px;
    height: 32px;
    display: flex;
    align-items: center;
    justify-content: center;
    border: 1px solid #646464;
    background: #7a7a7a;
}

.fm-toolbar input {
    flex: 1;
    height: 31px;
    padding: 0 6px;
    border: 1px solid #606060;
    background: #808080;
    color: #191919;
    font: inherit;
}

.fm-list {
    flex: 1;
    min-height: 0;
    border: 1px solid #626262;
    background: #808080;
}

table {
    width: 100%;
    table-layout: fixed;
    border-collapse: collapse;
}

th,
td {
    height: 29px;
    padding: 0 6px 4px;
    overflow: hidden;
    text-align: left;
    text-overflow: ellipsis;
    white-space: nowrap;
    font-weight: normal;
}

th {
    background: #6b6b6b;
}

.col-type {
    width: 150px;
}

.col-size {
    width: 92px;
}

th:last-child,
td:last-child {
    padding-right: 7px;
    text-align: right;
}

td svg {
    display: inline-block;
    margin-right: 8px;
    vertical-align: -4px;
}

tbody tr:nth-child(odd) {
    background: #7b7b7b;
}

tbody .selected:nth-child(odd) {
    background: #0b0a67;
    color: #8b8b9a;
}

.fm-status {
    height: 35px;
    padding-top: 13px;
}

/* alert */
.overlay {
    position: absolute;
    inset: 0;
    display: flex;
    align-items: center;
    justify-content: center;
}

.dialog {
    width: 398px;
    border-radius: 3px;
    overflow: hidden;
    background: #eaeaea;
    color: #2a2a2a;
    box-shadow: 0 0 12px rgba(0, 0, 0, 0.6);
}

.dialog-title {
    height: 28px;
    padding: 0 6px 0 7px;
    background: #c9c1e3;
}

.dialog-title button {
    width: 14px;
    height: 14px;
    border: 1px solid #b5766e;
    border-radius: 50%;
    background: #ec7b6d;
}

.dialog-body {
    display: flex;
    flex-direction: column;
    padding: 9px 5px 6px 7px;
}

.dialog-body textarea {
    height: 75px;
    margin: 22px 8px 30px 6px;
    padding: 6px 7px;
    border: 1px solid #bcbcbc;
    outline: 0;
    resize: none;
    background: #fff;
    color: #2a2a2a;
    font: inherit;
    line-height: 15px;
}

.dialog-close {
    align-self: flex-end;
    width: 50px;
    height: 33px;
    border: 2px solid #b9b7dc;
    background: #f5f5f5;
}

/* floating helpers */
.floating {
    position: absolute;
    right: 0;
    bottom: 10px;
    display: flex;
    flex-direction: column;
    align-items: flex-end;
    gap: 8px;
}

.floating button {
    display: flex;
    align-items: center;
    justify-content: center;
    background: #f9f9f9;
    box-shadow: 0 1px 8px rgba(0, 0, 0, 0.3);
}

.floating .translate {
    width: 36px;
    height: 36px;
    margin-right: 4px;
    border-radius: 50%;
}

.floating .assistant {
    width: 49px;
    height: 46px;
    padding-left: 5px;
    border-radius: 23px 0 0 23px;
}

/* downloads */
.downloads {
    flex: none;
    height: 61px;
    display: flex;
    align-items: center;
    padding: 0 12px 2px 0;
    border-top: 1px solid #c4c4c4;
    background: #f7f7f7;
    color: #3c4043;
}

.download {
    display: flex;
    align-items: center;
    gap: 14px;
    padding-left: 21px;
    font-size: 16px;
}

.download-menu {
    height: 48px;
    margin: 0 auto 0 26px;
    padding-right: 18px;
    border-right: 1px solid #c0c0c0;
}

.show-all {
    width: 89px;
    height: 34px;
    margin-right: 12px;
    border: 1px solid #bdbdbd;
    border-radius: 4px;
    color: #202124;
    font-weight: 600;
}
```
